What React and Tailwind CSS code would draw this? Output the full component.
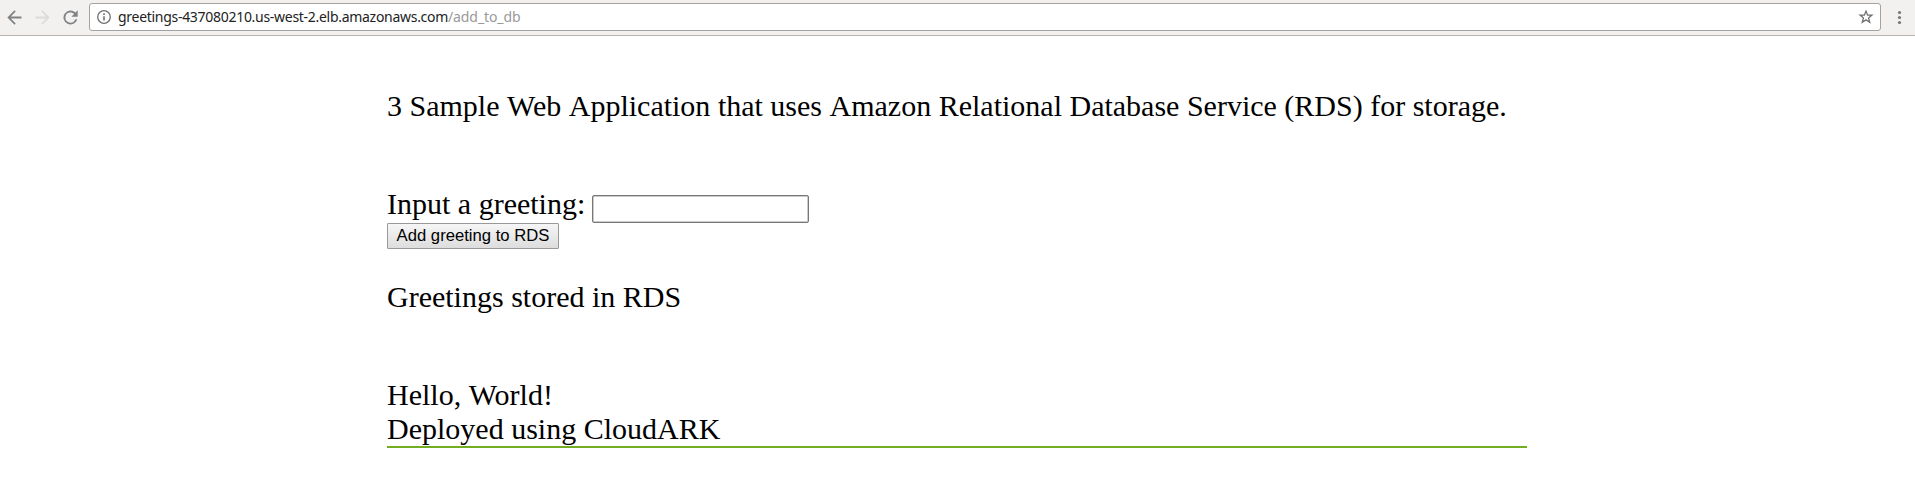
export default function App() {
  return (
    <div className="h-[483px] w-full overflow-hidden bg-white text-black">
      <header className="flex h-9 items-start border-b border-[#b6b4b2] bg-[#f2f1f0] pt-[3px] pl-1">
        <nav className="flex h-7 items-center gap-[7px] text-[#808284]">
          <svg className="size-[21px]" viewBox="0 0 24 24" fill="currentColor"><path d="M20 10.8H7.8l5.6-5.6L12 3.8l-8.2 8.2 8.2 8.2 1.4-1.4-5.6-5.6H20z" /></svg>
          <svg className="size-[21px] text-[#dcdcdc]" viewBox="0 0 24 24" fill="currentColor"><path d="M4 10.8h12.2l-5.6-5.6L12 3.8l8.2 8.2-8.2 8.2-1.4-1.4 5.6-5.6H4z" /></svg>
          <svg className="size-[21px]" viewBox="0 0 24 24" fill="currentColor"><path d="M17.65 6.35A8 8 0 1 0 19.73 14h-2.3A5.8 5.8 0 1 1 12 6.2c1.6 0 3 .6 4.1 1.7L13 11h7.2V3.8z" /></svg>
        </nav>
        <div className="ml-2 flex h-7 w-[1792px] items-center rounded-[3px] border border-[#a3a2a1] bg-white pr-[6px] pl-[6px]">
          <svg className="size-4 text-[#707070]" viewBox="0 0 16 16" fill="none" stroke="currentColor"><circle cx="8" cy="8" r="6.3" strokeWidth="1.3" /><path d="M8 7.2v4.3M8 4.2v1.7" strokeWidth="1.6" /></svg>
          <span className="ml-[6px] flex-1 font-['Noto_Sans',sans-serif] text-[14px] leading-none tracking-[-0.29px] text-[#222]">greetings-437080210.us-west-2.elb.amazonaws.com<span className="tracking-[-0.1px] text-[#999]">/add_to_db</span></span>
          <svg className="size-4" viewBox="0 0 16 16" fill="none" stroke="#707070" strokeWidth="1.3"><path d="M8 2.2l1.65 4h4.2l-3.3 2.75 1.2 4.3L8 10.85l-3.75 2.4 1.2-4.3-3.3-2.75h4.2z" /></svg>
        </div>
        <svg className="ml-[14px] h-7 w-2" viewBox="0 0 8 28" fill="#777"><circle cx="4.5" cy="9.5" r="1.6" /><circle cx="4.5" cy="14.5" r="1.6" /><circle cx="4.5" cy="19.5" r="1.6" /></svg>
      </header>
      <main className="ml-[387px] w-[1140px] pt-[53px] font-['Liberation_Serif',serif] text-[30px] leading-[34px]">
        <p className="whitespace-nowrap">3 Sample <span className="inline-block">Web</span> <span className="inline-block">Application</span> that uses <span className="inline-block">Amazon</span> Relational Database Service (RDS) for storage.</p>
        <form className="mt-16">
          <label className="flex h-9 gap-[7px]"><span>Input a greeting:</span><input className="mt-2 h-7 w-[217px] rounded-[2px] border border-[#777] bg-white shadow-[inset_0_0_0_0.5px_#999]" /></label>
          <button type="button" className="block h-[26px] w-[172px] rounded-[1px] border border-[#999] bg-linear-to-b from-[#f6f6f6] to-[#dddddd] font-['Liberation_Sans',sans-serif] text-[16.667px] leading-none whitespace-nowrap">Add greeting to RDS</button>
        </form>
        <p className="mt-[31px]">Greetings stored in RDS</p>
        <p className="mt-16">Hello, <span className="inline-block">World!</span></p>
        <p className="border-b-2 border-[#73ad21]">Deployed using CloudARK</p>
      </main>
    </div>
  );
}
